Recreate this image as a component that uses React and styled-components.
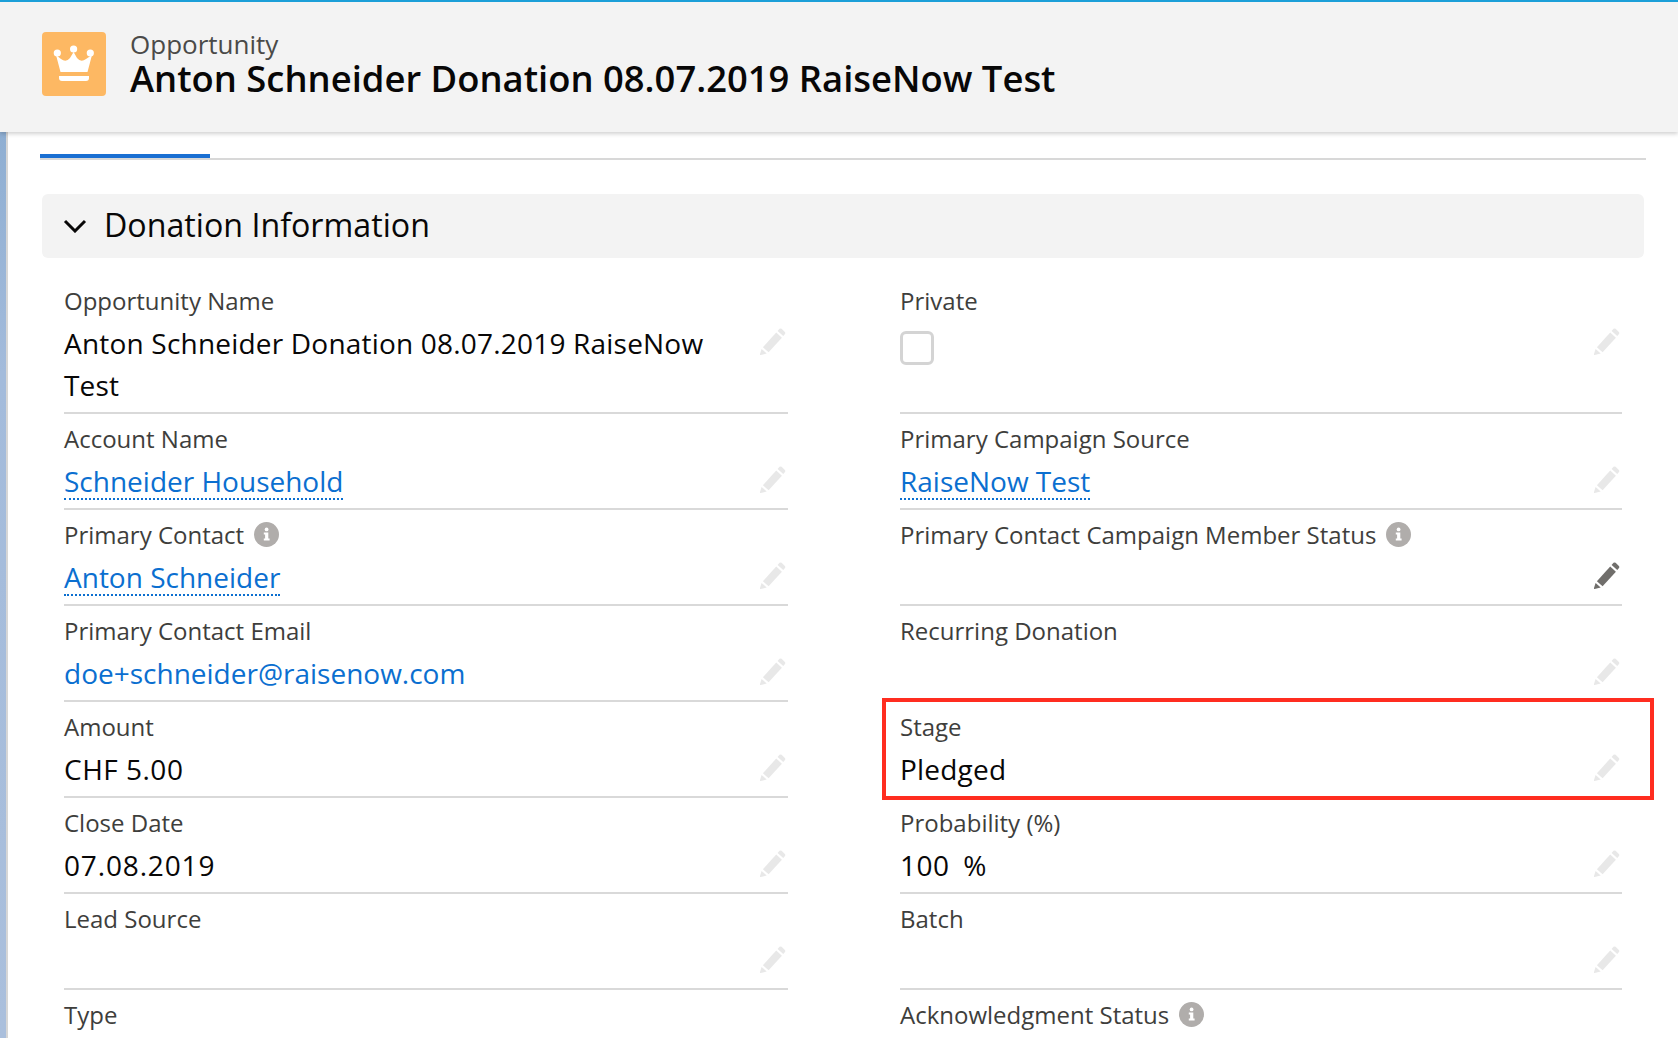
import React from "react";
import styled, { createGlobalStyle } from "styled-components";

const GlobalStyle = createGlobalStyle`
  html, body {
    margin: 0;
    padding: 0;
    background: #fff;
    font-family: "Open Sans", "Noto Sans", sans-serif;
  }
`;

const Page = styled.div`
  width: 1678px;
  height: 1038px;
  overflow: hidden;
  display: flex;
  flex-direction: column;
`;

const Header = styled.header`
  position: relative;
  z-index: 1;
  flex: none;
  height: 132px;
  box-sizing: border-box;
  border-top: 2px solid #1b9fd8;
  background: #f3f3f3;
  box-shadow: 0 2px 4px rgba(0, 0, 0, 0.18);
  display: flex;
  align-items: flex-start;
  gap: 24px;
  padding: 30px 0 0 42px;
`;

const IconTile = styled.div`
  width: 64px;
  height: 64px;
  border-radius: 4px;
  background: #fdb863;
`;

const HeaderText = styled.div`
  display: flex;
  flex-direction: column;
`;

const ObjectName = styled.div`
  font-size: 26px;
  line-height: 30px;
  color: #4a4a48;
  margin-top: -3px;
`;

const RecordName = styled.h1`
  margin: 0;
  font-size: 36.4px;
  line-height: 39px;
  font-weight: 600;
  color: #080707;
`;

const Body = styled.div`
  flex: 1;
  display: flex;
  min-height: 0;
`;

const Strip = styled.div`
  width: 6px;
  flex: none;
  border-right: 2px solid #d6d6d6;
  background: linear-gradient(#8eaed2, #a3bbdb 240px, #aabfdc);
`;

const Content = styled.main`
  flex: 1;
  padding: 22px 32px 0 32px;
`;

const TabBar = styled.div`
  border-bottom: 2px solid #d8d8d8;
`;

const ActiveTab = styled.div`
  width: 170px;
  height: 4px;
  background: #1a6fd2;
`;

const SectionHeader = styled.div`
  margin: 34px 2px 0;
  height: 64px;
  box-sizing: border-box;
  border-radius: 6px;
  background: #f3f3f3;
  display: flex;
  align-items: center;
  gap: 17px;
  padding: 0 0 4px 21px;
`;

const SectionTitle = styled.h2`
  margin: 0;
  font-size: 32.2px;
  font-weight: 400;
  color: #080707;
`;

const FieldGrid = styled.div`
  display: grid;
  grid-template-columns: 724px 722px;
  column-gap: 112px;
  margin: 18px 0 0 24px;
`;

const Field = styled.div`
  position: relative;
  box-sizing: border-box;
  padding-top: 8px;
  border-bottom: ${(p) => (p.$last ? "0" : "2px solid #d9d9d9")};
`;

const Label = styled.div`
  display: flex;
  align-items: center;
  gap: 10px;
  height: 32px;
  margin-bottom: 5.5px;
  font-size: 24px;
  color: #3e3e3c;
`;

const ValueRow = styled.div`
  display: flex;
  justify-content: space-between;
  align-items: flex-start;
  min-height: 48.5px;
  padding: 0 2.5px 6.5px 0;
  box-sizing: border-box;
`;

const Value = styled.div`
  max-width: 640px;
  font-size: 28px;
  line-height: 42px;
  letter-spacing: ${(p) => p.$tracking || 0}px;
  word-spacing: ${(p) => p.$wordGap || 0}px;
  color: #080707;
`;

const RecordLink = styled.a`
  display: inline-block;
  line-height: 34px;
  color: #0b6fd0;
  border-bottom: 2px dotted #0b6fd0;
`;

const PlainLink = styled.a`
  color: #0b6fd0;
`;

const CheckBox = styled.span`
  display: block;
  box-sizing: border-box;
  width: 34px;
  height: 34px;
  margin-top: 9px;
  border: 3px solid #d4d4d4;
  border-radius: 6px;
  background: #fff;
`;

const Highlight = styled.div`
  position: absolute;
  top: -4px;
  left: -18px;
  right: -32px;
  bottom: -4px;
  border: 4px solid #ff2d20;
  pointer-events: none;
`;

const PencilSvg = styled.svg`
  flex: none;
  width: 26px;
  height: 27px;
  margin-top: 6px;
  color: ${(p) => (p.$active ? "#706e6b" : "#e8e8e8")};
`;

const Crown = () => (
  <IconTile>
    <svg width="64" height="64" viewBox="0 0 64 64" fill="#fff">
      <circle cx="15.3" cy="21" r="3.6" />
      <circle cx="31.6" cy="17" r="3.6" />
      <circle cx="48.3" cy="21" r="3.6" />
      <path d="M14 23 L19 27 Q24 31 28 26 L31.6 20 L35 26 Q39 31 44 27 L50 23 L45.5 40 L18.5 40 Z" />
      <path d="M17 44 H47 V46 Q47 49 44 49 H20 Q17 49 17 46 Z" />
    </svg>
  </IconTile>
);

const ChevronSvg = styled.svg`
  margin-top: 4px;
`;

const Chevron = () => (
  <ChevronSvg width="24" height="14" viewBox="0 0 24 14" fill="none" stroke="#080707" strokeWidth="3">
    <path d="M2 2 L12 12 L22 2" />
  </ChevronSvg>
);

const Pencil = ({ active }) => (
  <PencilSvg $active={active} viewBox="0 0 26 27" fill="currentColor">
    <path d="M19.5 0.8 Q20.6 0 21.6 0.8 L24.9 3.9 Q25.8 4.9 25 5.9 L23.3 8 L17.6 2.9 Z" />
    <path d="M16.2 4.6 L21.9 9.7 L8.6 24.3 L2.9 19.2 Z" />
    <path d="M1.6 21 L6.7 25.6 L0.6 27 Q-0.2 27 0 26 Z" />
  </PencilSvg>
);

const Info = () => (
  <svg width="25" height="25" viewBox="0 0 25 25">
    <circle cx="12.5" cy="12.5" r="12.5" fill="#b0adab" />
    <circle cx="12.6" cy="7.4" r="1.9" fill="#fff" />
    <path d="M9.8 10.6 H14.3 V16.6 H15.6 V18.6 H9.8 V16.6 H11.1 V12.6 H9.8 Z" fill="#fff" />
  </svg>
);

const fields = [
  { label: "Opportunity Name", value: "Anton Schneider Donation 08.07.2019 RaiseNow Test", tracking: 0.2 },
  { label: "Private", checkbox: true },
  { label: "Account Name", link: "Schneider Household" },
  { label: "Primary Campaign Source", link: "RaiseNow Test" },
  { label: "Primary Contact", info: true, link: "Anton Schneider" },
  { label: "Primary Contact Campaign Member Status", info: true, activePencil: true },
  { label: "Primary Contact Email", mail: "doe+schneider@raisenow.com" },
  { label: "Recurring Donation" },
  { label: "Amount", value: "CHF 5.00", tracking: 0.5 },
  { label: "Stage", value: "Pledged", highlight: true, tracking: 0.2 },
  { label: "Close Date", value: "07.08.2019", tracking: 0.85 },
  { label: "Probability (%)", value: "100 %", tracking: 0.5, wordGap: 6 },
  { label: "Lead Source" },
  { label: "Batch" },
  { label: "Type", last: true },
  { label: "Acknowledgment Status", info: true, last: true },
];

const App = () => {
  return (
    <Page>
      <GlobalStyle />
      <Header>
        <Crown />
        <HeaderText>
          <ObjectName>Opportunity</ObjectName>
          <RecordName>Anton Schneider Donation 08.07.2019 RaiseNow Test</RecordName>
        </HeaderText>
      </Header>
      <Body>
        <Strip />
        <Content>
          <TabBar>
            <ActiveTab />
          </TabBar>
          <SectionHeader>
            <Chevron />
            <SectionTitle>Donation Information</SectionTitle>
          </SectionHeader>
          <FieldGrid>
            {fields.map((f) => (
              <Field key={f.label} $last={f.last}>
                <Label>
                  {f.label}
                  {f.info && <Info />}
                </Label>
                {!f.last && (
                  <ValueRow>
                    <Value $tracking={f.tracking} $wordGap={f.wordGap}>
                      {f.value}
                      {f.link && <RecordLink>{f.link}</RecordLink>}
                      {f.mail && <PlainLink>{f.mail}</PlainLink>}
                      {f.checkbox && <CheckBox />}
                    </Value>
                    <Pencil active={f.activePencil} />
                  </ValueRow>
                )}
                {f.highlight && <Highlight />}
              </Field>
            ))}
          </FieldGrid>
        </Content>
      </Body>
    </Page>
  );
};

export default App;
